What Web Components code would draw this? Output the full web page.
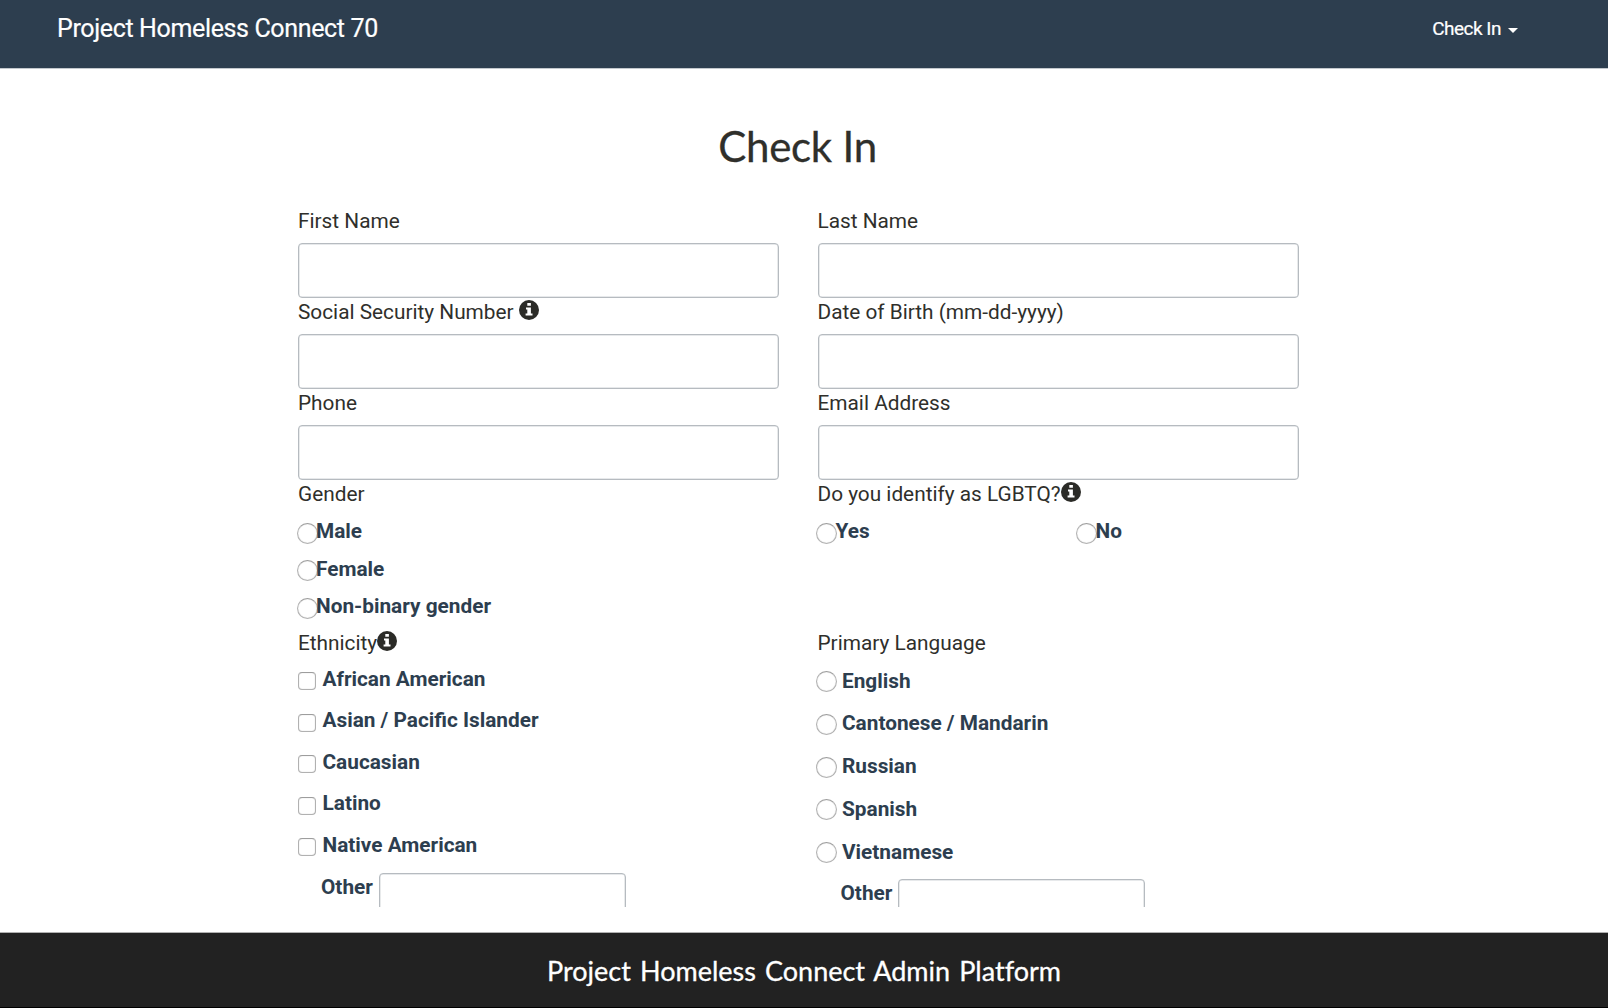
<!DOCTYPE html>
<html lang="en">
<head>
<meta charset="utf-8">
<title>Project Homeless Connect 70</title>
<style>
html,body{margin:0;height:100%;background:#fff;overflow:hidden}
body{font-family:Roboto,"Liberation Sans",sans-serif;color:#2f2f2b}
</style>
</head>
<body>
<phc-app></phc-app>
<script>
const define=(name,html,init)=>customElements.define(name,class extends HTMLElement{
  constructor(){super();this.attachShadow({mode:'open'}).innerHTML=html;}
  connectedCallback(){if(init)init(this,this.shadowRoot);}
});

define('phc-navbar',`<style>
:host{display:flex;justify-content:space-between;height:68px;box-sizing:content-box;background:#2d3e4f;border-bottom:1px solid #c3c8cd;color:#fff;padding:0 90px 0 57px}
.brand{font-size:25px;line-height:58px;letter-spacing:-.36px;-webkit-text-stroke:.2px #fff}
.menu{display:flex;font-size:19px;line-height:58px;letter-spacing:-.5px;-webkit-text-stroke:.2px #fff}
.caret{border:5px solid transparent;border-top-color:#fff;border-bottom:0;height:0;margin:28px 0 0 7px}
</style><span class="brand"><slot name="brand"></slot></span><span class="menu"><slot></slot><i class="caret"></i></span>`);

define('phc-info',`<style>
:host{display:inline-block;width:20px;height:20px;vertical-align:-1px}
svg{display:block}
</style><svg width="20" height="20" viewBox="0 0 20 20"><circle cx="10" cy="10" r="10" fill="#2b2b27"/><path fill="#fff" d="M8.3 3h3.6v2.8H8.3zM7 7.6h4.9v5.8h1.6v2H6.6v-2h1.7V9.5H7z"/></svg>`);

define('phc-label',`<style>
:host{display:block;height:36px;line-height:28px;font-size:20.8px;white-space:nowrap}
</style><slot></slot>`);

define('phc-field',`<style>
:host{display:block}
input{display:block;box-sizing:border-box;width:100%;height:55px;margin:0;border:1px solid #b6bbc0;box-shadow:inset 0 0 0 .5px #d0d4d7;border-radius:4px;background:#fff;padding:0 14px;font:21px Roboto,sans-serif}
</style><phc-label><slot></slot></phc-label><input type="text">`);

define('phc-choice',`<style>
:host{display:flex;align-items:flex-start;height:var(--pitch,37.5px);line-height:var(--lh,31px);font-size:20.8px;font-weight:700;color:#2d3e4f;white-space:nowrap}
input{appearance:none;flex:none;box-sizing:border-box;width:21px;height:21px;margin:6.5px 0 0 -1.5px;border:1px solid #b1b1b1;border-top-color:#9d9d9d;border-radius:50%;background:#fff;box-shadow:inset 0 0 1px #bbb}
:host([kind=checkbox]) input{width:18px;height:18px;margin:7.5px 0 0 0;border-radius:4px}
span{margin-left:var(--gap,-1.5px)}
</style><input><span><slot></slot></span>`,(el,root)=>{root.querySelector('input').type=el.getAttribute('kind')||'radio';});

define('phc-other',`<style>
:host{display:flex;align-items:flex-start;padding-left:23px;font-size:20.8px;font-weight:700;color:#2d3e4f;line-height:31px}
input{box-sizing:border-box;width:247px;height:55px;margin:1px 0 0 6px;border:1px solid #b6bbc0;box-shadow:inset 0 0 0 .5px #d0d4d7;border-radius:4px;background:#fff}
</style><span><slot></slot></span><input type="text">`);

define('phc-form',`<style>
:host{display:block;height:837.5px;overflow:hidden}
h1{margin:0;padding-right:13px;text-align:center;font:400 42px/60px Lato,sans-serif;letter-spacing:-.25px;-webkit-text-stroke:.3px #2f2f2b;padding-top:46.5px;height:91.5px}
.grid{display:grid;grid-template-columns:481px 481px;column-gap:38.5px;margin-left:298px}
.yesno{display:grid;grid-template-columns:260px 1fr}
.eth{--pitch:41.5px;--gap:6.5px;--lh:29px}
.lang{--pitch:42.8px;--lh:33px;--gap:5px}
</style>
<h1>Check In</h1>
<div class="grid">
<phc-field>First Name</phc-field><phc-field>Last Name</phc-field>
<phc-field>Social Security Number <phc-info></phc-info></phc-field><phc-field>Date of Birth (mm-dd-yyyy)</phc-field>
<phc-field>Phone</phc-field><phc-field>Email Address</phc-field>
<section><phc-label>Gender</phc-label><phc-choice>Male</phc-choice><phc-choice>Female</phc-choice><phc-choice>Non-binary gender</phc-choice></section>
<section><phc-label>Do you identify as LGBTQ?<phc-info></phc-info></phc-label><div class="yesno"><phc-choice>Yes</phc-choice><phc-choice>No</phc-choice></div></section>
<section class="eth"><phc-label>Ethnicity<phc-info></phc-info></phc-label>
<phc-choice kind="checkbox">African American</phc-choice><phc-choice kind="checkbox">Asian / Pacific Islander</phc-choice><phc-choice kind="checkbox">Caucasian</phc-choice><phc-choice kind="checkbox">Latino</phc-choice><phc-choice kind="checkbox">Native American</phc-choice><phc-other>Other</phc-other></section>
<section class="lang"><phc-label>Primary Language</phc-label>
<phc-choice>English</phc-choice><phc-choice>Cantonese / Mandarin</phc-choice><phc-choice>Russian</phc-choice><phc-choice>Spanish</phc-choice><phc-choice>Vietnamese</phc-choice><phc-other>Other</phc-other></section>
</div>`);

define('phc-footer',`<style>
:host{display:block;box-sizing:border-box;height:76px;border-top:1px solid #b0b0b0;border-bottom:1px solid #000;background:#222;color:#fff;text-align:center;font:400 27px/76px Lato,sans-serif;font-variant-ligatures:none;word-spacing:2.2px;-webkit-text-stroke:.3px #fff}
</style><slot></slot>`);

define('phc-app',`<style>
:host{display:flex;flex-direction:column;height:100vh;background:#fff}
phc-footer{margin-top:auto}
</style>
<phc-navbar><span slot="brand">Project Homeless Connect 70</span>Check In</phc-navbar>
<phc-form></phc-form>
<phc-footer>Project Homeless Connect Admin Platform</phc-footer>`);
</script>
</body>
</html>
